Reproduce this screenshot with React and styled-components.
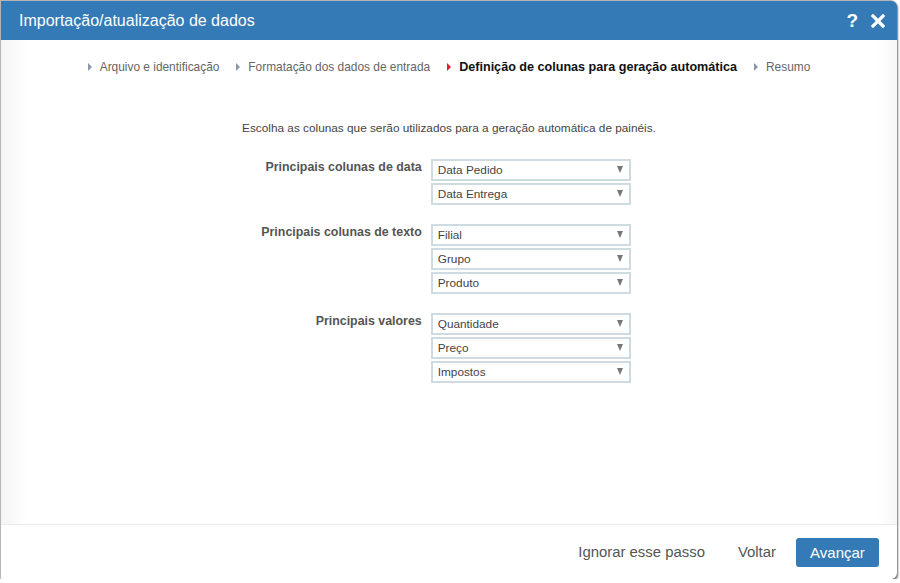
import React from "react";
import styled, { createGlobalStyle } from "styled-components";

const Global = createGlobalStyle`
  html, body { margin: 0; padding: 0; background: #fff; }
  body { font-family: "Liberation Sans", Arial, sans-serif; }
  * { box-sizing: border-box; }
`;

const Dialog = styled.div`
  width: 897px;
  height: 579px;
  display: flex;
  flex-direction: column;
  background: #fff;
  border-left: 1px solid #b5b5b5;
  border-top: 1px solid #b5b5b5;
  border-radius: 0 6px 6px 2px;
  box-shadow: 1px 2px 2px rgba(0, 0, 0, 0.55);
  overflow: hidden;
`;

const Header = styled.div`
  height: 39px;
  flex: none;
  background: #337ab7;
  display: flex;
  align-items: center;
  padding: 0 12px 0 18px;
  color: #fff;
`;

const Title = styled.h1`
  flex: 1;
  margin: 0;
  font-weight: normal;
  font-size: 16px;
`;

const HeaderBtn = styled.span`
  font-weight: bold;
  font-size: 19px;
  margin-left: 13px;
  line-height: 1;
  display: flex;
  align-items: center;
`;

const Body = styled.div`
  flex: 1;
  display: flex;
  flex-direction: column;
  align-items: center;
  background: linear-gradient(to right, #f4f4f4 0px, #fff 26px, #fff calc(100% - 20px), #f7f7f7 100%);
`;

const Steps = styled.div`
  display: flex;
  align-items: center;
  gap: 17px;
  margin-top: 19px;
  height: 16px;
`;

const Step = styled.div`
  display: flex;
  align-items: center;
  gap: 8px;
  font-size: ${(p) => (p.$active ? "12.6px" : "11.9px")};
  color: ${(p) => (p.$active ? "#111" : "#666")};
  font-weight: ${(p) => (p.$active ? "bold" : "normal")};
`;

const Arrow = styled.span`
  width: 0;
  height: 0;
  border-top: 4px solid transparent;
  border-bottom: 4px solid transparent;
  border-left: 4px solid ${(p) => (p.$active ? "#e8192c" : "#8898ab")};
`;

const Intro = styled.p`
  margin: 46px 0 0;
  font-size: 11.8px;
  color: #444;
`;

const Form = styled.div`
  margin-top: 24px;
  display: grid;
  grid-template-columns: auto 200px;
  column-gap: 9px;
  row-gap: 19px;
  margin-right: 6px;
`;

const Label = styled.div`
  text-align: right;
  font-weight: bold;
  font-size: 12.4px;
  color: #555;
  padding-top: 1px;
`;

const Selects = styled.div`
  display: flex;
  flex-direction: column;
  gap: 2px;
`;

const Select = styled.div`
  height: 22px;
  border: 2px solid #cfdbe2;
  display: flex;
  align-items: center;
  justify-content: space-between;
  padding: 0 6px 0 5px;
  font-size: 11.8px;
  color: #444;
  background: #fff;
`;

const Caret = styled.span`
  width: 0;
  height: 0;
  border-left: 3.5px solid transparent;
  border-right: 3.5px solid transparent;
  border-top: 7px solid #777;
  margin-top: -1px;
`;

const Footer = styled.div`
  height: 55px;
  flex: none;
  border-top: 1px solid #ececec;
  display: flex;
  align-items: center;
  justify-content: flex-end;
  padding-right: 18px;
  gap: 20px;
`;

const LinkBtn = styled.button`
  background: none;
  border: none;
  font-family: inherit;
  font-size: 14.9px;
  color: #555;
  padding: 0;
  margin-right: ${(p) => p.$space || 0}px;
`;

const PrimaryBtn = styled.button`
  background: #337ab7;
  border: none;
  border-radius: 3px;
  color: #fff;
  font-family: inherit;
  font-size: 15px;
  height: 29px;
  width: 83px;
`;

const groups = [
  { label: "Principais colunas de data", items: ["Data Pedido", "Data Entrega"] },
  { label: "Principais colunas de texto", items: ["Filial", "Grupo", "Produto"] },
  { label: "Principais valores", items: ["Quantidade", "Preço", "Impostos"] },
];

const steps = [
  "Arquivo e identificação",
  "Formatação dos dados de entrada",
  "Definição de colunas para geração automática",
  "Resumo",
];

export default function App() {
  return (
    <>
      <Global />
      <Dialog>
        <Header>
          <Title>Importação/atualização de dados</Title>
          <HeaderBtn>?</HeaderBtn>
          <HeaderBtn>
            <svg width="14" height="14" viewBox="0 0 14 14">
              <path d="M2 2 L12 12 M12 2 L2 12" stroke="#fff" strokeWidth="3.2" strokeLinecap="square" />
            </svg>
          </HeaderBtn>
        </Header>
        <Body>
          <Steps>
            {steps.map((s, i) => (
              <Step key={s} $active={i === 2}>
                <Arrow $active={i === 2} />
                {s}
              </Step>
            ))}
          </Steps>
          <Intro>Escolha as colunas que serão utilizados para a geração automática de painéis.</Intro>
          <Form>
            {groups.map((g) => (
              <React.Fragment key={g.label}>
                <Label>{g.label}</Label>
                <Selects>
                  {g.items.map((it) => (
                    <Select key={it}>
                      {it}
                      <Caret />
                    </Select>
                  ))}
                </Selects>
              </React.Fragment>
            ))}
          </Form>
        </Body>
        <Footer>
          <LinkBtn $space={13}>Ignorar esse passo</LinkBtn>
          <LinkBtn>Voltar</LinkBtn>
          <PrimaryBtn>Avançar</PrimaryBtn>
        </Footer>
      </Dialog>
    </>
  );
}
